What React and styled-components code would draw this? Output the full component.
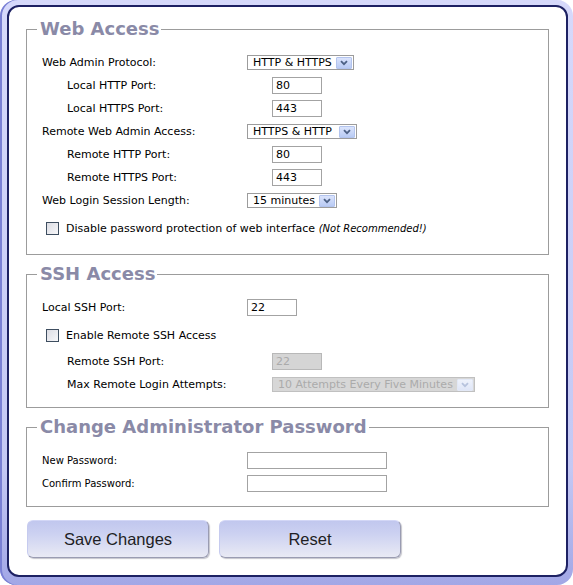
import React from "react"
import styled, { createGlobalStyle } from "styled-components"

const GlobalStyle = createGlobalStyle`
  body {
    margin: 0;
    background: #ffffff;
    font-family: "DejaVu Sans", Verdana, sans-serif;
  }
`

export default function App() {
  return (
    <>
      <GlobalStyle />
      <Frame>
        <Panel>
          <Group>
            <Legend>Web Access</Legend>
            <Row>
              <Label>Web Admin Protocol:</Label>
              <Select width={107}>HTTP &amp; HTTPS</Select>
            </Row>
            <Row $indent>
              <Label>Local HTTP Port:</Label>
              <Field $w={50} defaultValue="80" />
            </Row>
            <Row $indent>
              <Label>Local HTTPS Port:</Label>
              <Field $w={50} defaultValue="443" />
            </Row>
            <Row>
              <Label>Remote Web Admin Access:</Label>
              <Select width={110}>HTTPS &amp; HTTP</Select>
            </Row>
            <Row $indent>
              <Label>Remote HTTP Port:</Label>
              <Field $w={50} defaultValue="80" />
            </Row>
            <Row $indent>
              <Label>Remote HTTPS Port:</Label>
              <Field $w={50} defaultValue="443" />
            </Row>
            <Row>
              <Label>Web Login Session Length:</Label>
              <Select width={90}>15 minutes</Select>
            </Row>
            <CheckRow>
              <CheckBox />
              <span>
                Disable password protection of web interface{" "}
                <Note>(Not Recommended!)</Note>
              </span>
            </CheckRow>
          </Group>

          <Group>
            <Legend>SSH Access</Legend>
            <Row>
              <Label>Local SSH Port:</Label>
              <Field $w={50} defaultValue="22" />
            </Row>
            <CheckRow>
              <CheckBox />
              <span>Enable Remote SSH Access</span>
            </CheckRow>
            <Row $indent>
              <Label>Remote SSH Port:</Label>
              <Field $w={50} defaultValue="22" disabled />
            </Row>
            <Row $indent>
              <Label>Max Remote Login Attempts:</Label>
              <Select width={203} disabled>
                10 Attempts Every Five Minutes
              </Select>
            </Row>
          </Group>

          <Group>
            <Legend>Change Administrator Password</Legend>
            <Row>
              <Label $size={10}>New Password:</Label>
              <Field $w={140} type="password" />
            </Row>
            <Row>
              <Label $size={10}>Confirm Password:</Label>
              <Field $w={140} type="password" />
            </Row>
          </Group>

          <Actions>
            <Button>Save Changes</Button>
            <Button>Reset</Button>
          </Actions>
        </Panel>
      </Frame>
    </>
  )
}

function Select({ width, disabled, children }) {
  return (
    <SelectBox $w={width} $disabled={disabled}>
      <span>{children}</span>
      <Arrow $disabled={disabled}>
        <svg width="8" height="6" viewBox="0 0 8 6">
          <path
            d="M1 1.2 L4 4.2 L7 1.2"
            fill="none"
            stroke={disabled ? "#b7c3dd" : "#4d6185"}
            strokeWidth="1.8"
          />
        </svg>
      </Arrow>
    </SelectBox>
  )
}

const Frame = styled.div`
  box-sizing: border-box;
  width: 573px;
  height: 585px;
  padding: 5px 5px 8px 7px;
  border-radius: 16px;
  background: linear-gradient(#d6d9fb, #c4c8f4 80%, #a2a7e6);
  box-shadow: inset 2px 0 0 #7a80d4;
`

const Panel = styled.div`
  box-sizing: border-box;
  height: 100%;
  padding: 11px 17px 0 17px;
  background: #ffffff;
  border: 2px solid #1d2163;
  border-radius: 12px;
`

const Group = styled.fieldset`
  margin: 0 0 8px 0;
  padding: 11px 15px 11px 15px;
  border: 1px solid #9c9c9c;
  min-inline-size: 0;
`

const Legend = styled.legend`
  margin-left: -5px;
  padding: 0 2px 0 3px;
  font-size: 18px;
  line-height: 22px;
  font-weight: bold;
  color: #8a8aa7;
`

const Row = styled.div`
  display: flex;
  align-items: center;
  height: 23px;
  padding-left: ${(p) => (p.$indent ? 25 : 0)}px;
  font-size: 11px;
  color: #000000;
`

const Label = styled.label`
  width: 205px;
  flex-shrink: 0;
  font-size: ${(p) => p.$size || 11}px;
`

const CheckRow = styled.div`
  display: flex;
  align-items: center;
  gap: 7px;
  height: 23px;
  margin: 5px 0 3px 4px;
  font-size: 11px;
  color: #000000;
`

const CheckBox = styled.span`
  box-sizing: border-box;
  width: 13px;
  height: 13px;
  flex-shrink: 0;
  border: 1px solid #3e4e60;
  background: linear-gradient(135deg, #dcdde4, #f7f7f9);
`

const Note = styled.i`
  font-size: 10px;
`

const Field = styled.input`
  box-sizing: border-box;
  width: ${(p) => p.$w}px;
  height: 17px;
  margin: 0;
  padding: 0 3px;
  border: 1px solid ${(p) => (p.disabled ? "#b8b8b8" : "#a3a3a3")};
  background: ${(p) => (p.disabled ? "#d5d5d5" : "#ffffff")};
  color: ${(p) => (p.disabled ? "#aaaaaa" : "#000000")};
  font-family: "DejaVu Sans", Verdana, sans-serif;
  font-size: 11px;
  outline: none;
`

const SelectBox = styled.div`
  box-sizing: border-box;
  display: inline-flex;
  align-items: center;
  justify-content: space-between;
  width: ${(p) => p.$w}px;
  height: 15px;
  padding: 0 1px 0 5px;
  border: 1px solid ${(p) => (p.$disabled ? "#c0c0c0" : "#9c9c9c")};
  background: ${(p) => (p.$disabled ? "#d7d7d7" : "#ffffff")};
  color: ${(p) => (p.$disabled ? "#ababab" : "#000000")};
  font-size: 11px;
  white-space: nowrap;
`

const Arrow = styled.span`
  box-sizing: border-box;
  display: flex;
  align-items: center;
  justify-content: center;
  width: 16px;
  height: 12px;
  border: 1px solid ${(p) => (p.$disabled ? "#e2e8f6" : "#b3c4ee")};
  border-radius: 1px;
  background: ${(p) =>
    p.$disabled
      ? "linear-gradient(#eef2fb, #dfe6f7)"
      : "linear-gradient(#dbe4fc, #b9cbf4)"};
`

const Actions = styled.div`
  display: flex;
  gap: 10px;
  margin-top: 13px;
  padding-left: 1px;
`

const Button = styled.button`
  box-sizing: border-box;
  width: 182px;
  height: 38px;
  border: 1px solid;
  border-color: #d3d7f6 #9a9cb2 #9a9cb2 #c6cbef;
  border-radius: 6px;
  background: linear-gradient(#c1c7ee 0%, #ccd1f1 35%, #e9eaf4 100%);
  box-shadow: 1px 1px 1px rgba(90, 90, 110, 0.35);
  color: #1e1e24;
  font-family: "Liberation Sans", Arial, sans-serif;
  font-size: 16.5px;
`
